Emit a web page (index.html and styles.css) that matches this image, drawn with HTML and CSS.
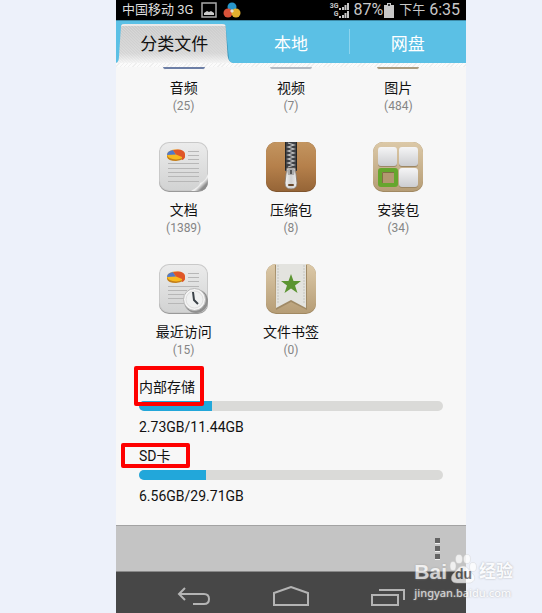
FILE: index.html
```html
<!DOCTYPE html>
<html lang="zh-CN">
<head>
  <meta charset="UTF-8">
  <meta name="viewport" content="width=device-width, initial-scale=1">
  <title>分类文件</title>
  <link rel="stylesheet" href="styles.css">
</head>
<body>
  <div class="phone">
    <header class="status">
      <span class="carrier">中国移动 3G</span>
      <svg class="shot-icon" width="16" height="16" viewBox="0 0 16 16">
        <rect x="1" y="1" width="14" height="14" fill="none" stroke="#aaa" stroke-width="1.5"/>
        <path d="M3 13V11L6 9L8 10L10 9L13 11V13Z" fill="#ccc"/>
      </svg>
      <svg class="app-icon" width="18" height="16" viewBox="0 0 18 16">
        <circle cx="9" cy="5" r="4.5" fill="#2795c9"/>
        <circle cx="5" cy="11" r="4.5" fill="#d9533a"/>
        <circle cx="13" cy="11" r="4.5" fill="#e3b02f"/>
        <path d="M9 7L11 9L9 11L7 9Z" fill="#e9ddd0"/>
      </svg>
      <div class="signals">
        <div class="signal">
          <span>3G</span>
          <svg width="10" height="7" viewBox="0 0 10 7"><path d="M0 5h2v2H0zM3 4h2v3H3zM5.5 2h2v5h-2zM8 0h2v7H8z" fill="#c8c8c8"/></svg>
        </div>
        <div class="signal">
          <span>G</span>
          <svg width="10" height="7" viewBox="0 0 10 7"><path d="M0 5h2v2H0zM3 4h2v3H3zM5.5 2h2v5h-2zM8 0h2v7H8z" fill="#c8c8c8"/></svg>
        </div>
      </div>
      <span class="battery-text">87%</span>
      <svg class="battery" width="10" height="15" viewBox="0 0 10 15">
        <path d="M3 0H7V2H10V15H0V2H3Z" fill="#c8c8c8"/>
        <path d="M4 1H6V3H4Z" fill="#333"/>
      </svg>
      <span class="noon">下午</span>
      <span class="clock">6:35</span>
    </header>

    <nav class="tabs">
      <button class="tab active" type="button">
        <svg class="tab-shape" viewBox="0 0 117 43" preserveAspectRatio="none">
          <defs>
            <linearGradient id="tabFill" x1="0" y1="0" x2="0" y2="1">
              <stop offset="0" stop-color="#c9c9c9"/>
              <stop offset="0.75" stop-color="#d4d4d4"/>
              <stop offset="1" stop-color="#f3f3f3"/>
            </linearGradient>
            <pattern id="weave" width="3" height="3" patternUnits="userSpaceOnUse">
              <path d="M0 0L3 3" stroke="#fff" stroke-opacity="0.3" stroke-width="1"/>
            </pattern>
          </defs>
          <path d="M0 43Q4 42 4 36L6 6Q6 3 9 3H106Q109 3 110 6L113 36Q113 42 117 43Z" fill="#3b92b5"/>
          <path d="M0 43Q3 42 3 36L5 6Q5 3 8 3H107Q110 3 110 6L112 36Q113 42 117 43Z" fill="url(#tabFill)"/>
          <path d="M0 43Q3 42 3 36L5 6Q5 3 8 3H107Q110 3 110 6L112 36Q113 42 117 43Z" fill="url(#weave)"/>
          <path d="M6 5Q6 4 8 4H107Q109 4 109 5" fill="none" stroke="#f2f2f2" stroke-width="1.5"/>
        </svg>
        <span class="tab-text">分类文件</span>
      </button>
      <button class="tab" type="button">本地</button>
      <button class="tab divided" type="button">网盘</button>
    </nav>
    <div class="tab-edge"></div>

    <main class="content">
      <div class="categories">
        <button class="category" type="button">
          <span class="icon-cut music"></span>
          <span class="name">音频</span>
          <span class="count">(25)</span>
        </button>
        <button class="category" type="button">
          <span class="icon-cut video"></span>
          <span class="name">视频</span>
          <span class="count">(7)</span>
        </button>
        <button class="category" type="button">
          <span class="icon-cut picture"></span>
          <span class="name">图片</span>
          <span class="count">(484)</span>
        </button>

        <button class="category" type="button">
          <svg width="50" height="50" viewBox="0 0 50 50">
            <defs>
              <linearGradient id="paper" x1="0" y1="0" x2="0" y2="1">
                <stop offset="0" stop-color="#ebebeb"/>
                <stop offset="1" stop-color="#d2d3d3"/>
              </linearGradient>
              <linearGradient id="curl" x1="0.2" y1="0.2" x2="0.75" y2="0.75">
                <stop offset="0" stop-color="#d2d3d3"/>
                <stop offset="0.4" stop-color="#fff"/>
                <stop offset="0.7" stop-color="#eee"/>
                <stop offset="1" stop-color="#8c8c8c"/>
              </linearGradient>
            </defs>
            <rect x="0" y="2" width="49" height="48" rx="10" fill="#999"/>
            <rect x="0" y="0" width="49" height="49" rx="10" fill="#c9c9c9"/>
            <rect x="1" y="1" width="47" height="47" rx="9" fill="url(#paper)"/>
            <path d="M49 32V39Q49 49 39 49H32Q41 44 41 41Q46 40 49 32Z" fill="url(#curl)"/>
            <path d="M29 9.5H40M29 13.5H40M29 17.5H40M9 21.5H40M9 26.5H40M9 30.5H40M9 34.5H40M9 39.5H40" stroke="#b7b7b7"/>
            <path d="M8 13V15Q9 19 17 19Q26 18 26 14V12Z" fill="#c47e18"/>
            <ellipse cx="17" cy="12.5" rx="9" ry="5" fill="#f8b91e"/>
            <path d="M17 12.5L14 8Q8 9 8 13Z" fill="#5278c9"/>
            <path d="M17 12.5L14 8Q25 6 26 12V14Q26 17 23 18V15Z" fill="#df5628"/>
          </svg>
          <span class="name">文档</span>
          <span class="count">(1389)</span>
        </button>
        <button class="category" type="button">
          <svg width="50" height="50" viewBox="0 0 50 50">
            <defs>
              <linearGradient id="leather" x1="0" y1="0" x2="0" y2="1">
                <stop offset="0" stop-color="#c39560"/>
                <stop offset="0.5" stop-color="#b5804b"/>
                <stop offset="1" stop-color="#966537"/>
              </linearGradient>
              <linearGradient id="pull" x1="0" y1="0" x2="1" y2="0">
                <stop offset="0" stop-color="#f4f4f4"/>
                <stop offset="0.5" stop-color="#d0d0d0"/>
                <stop offset="1" stop-color="#eee"/>
              </linearGradient>
            </defs>
            <rect width="50" height="50" rx="10" fill="#80552e"/>
            <rect width="50" height="49" rx="10" fill="url(#leather)"/>
            <path d="M19 0H31V29H19Z" fill="#3d3f43"/>
            <path d="M19.5 0V28M30.5 0V28" stroke="#252525"/>
            <path d="M22 1L28 3L22 5L28 7L22 9L28 11L22 13L28 15L22 17L28 19L22 21L28 23L22 25" fill="none" stroke="#c0c0c0" stroke-width="1.2"/>
            <path d="M21 26H29L30 32L31 41Q31 47 25 47Q19 47 19 41L20 32Z" fill="url(#pull)" stroke="#80756a" stroke-width="0.8"/>
            <path d="M21 28Q25 25 29 28L28 33H22Z" fill="#aaa"/>
            <path d="M24 28H26V32H24Z" fill="#555"/>
            <rect x="22" y="42" width="6" height="2" rx="1" fill="#68482b"/>
          </svg>
          <span class="name">压缩包</span>
          <span class="count">(8)</span>
        </button>
        <button class="category" type="button">
          <svg width="50" height="50" viewBox="0 0 50 50">
            <defs>
              <linearGradient id="sand" x1="0" y1="0" x2="0" y2="1">
                <stop offset="0" stop-color="#dcc9a8"/>
                <stop offset="1" stop-color="#b69d76"/>
              </linearGradient>
              <linearGradient id="block" x1="0" y1="0" x2="0" y2="1">
                <stop offset="0" stop-color="#f5f5f6"/>
                <stop offset="1" stop-color="#cccdd0"/>
              </linearGradient>
            </defs>
            <rect width="50" height="50" rx="10" fill="#a18962"/>
            <rect width="50" height="49" rx="10" fill="url(#sand)"/>
            <g fill="#9c8765">
              <rect x="5" y="6" width="19" height="19" rx="3"/>
              <rect x="26" y="6" width="19" height="19" rx="3"/>
              <rect x="26" y="27" width="19" height="19" rx="3"/>
            </g>
            <g fill="url(#block)">
              <rect x="5" y="5" width="19" height="19" rx="3"/>
              <rect x="26" y="5" width="19" height="19" rx="3"/>
              <rect x="26" y="26" width="19" height="19" rx="3"/>
            </g>
            <rect x="7" y="28" width="16" height="15" rx="1" fill="#b39870" stroke="#66a62d" stroke-width="4"/>
            <path d="M9.5 41V30.5H21" fill="none" stroke="#807044"/>
          </svg>
          <span class="name">安装包</span>
          <span class="count">(34)</span>
        </button>

        <button class="category" type="button">
          <svg width="50" height="50" viewBox="0 0 50 50">
            <rect x="0" y="2" width="49" height="48" rx="10" fill="#999"/>
            <rect x="0" y="0" width="49" height="49" rx="10" fill="#c9c9c9"/>
            <rect x="1" y="1" width="47" height="47" rx="9" fill="url(#paper)"/>
            <path d="M29 9.5H40M29 13.5H40M29 17.5H40M9 22.5H40M9 26.5H28M9 30.5H25M9 34.5H25M9 39.5H26" stroke="#b7b7b7"/>
            <path d="M8 13V15Q9 19 17 19Q26 18 26 14V12Z" fill="#c47e18"/>
            <ellipse cx="17" cy="12.5" rx="9" ry="5" fill="#f8b91e"/>
            <path d="M17 12.5L14 8Q8 9 8 13Z" fill="#5278c9"/>
            <path d="M17 12.5L14 8Q25 6 26 12V14Q26 17 23 18V15Z" fill="#df5628"/>
            <circle cx="37" cy="37" r="12" fill="#8f8f8f"/>
            <circle cx="35.5" cy="35.5" r="11" fill="#f4f4f4" stroke="#b8b8b8"/>
            <circle cx="35.5" cy="35.5" r="8.5" fill="#f0f1f1" stroke="#ddd"/>
            <path d="M34 28L35 36L39 40" fill="none" stroke="#3b4248" stroke-width="2"/>
          </svg>
          <span class="name">最近访问</span>
          <span class="count">(15)</span>
        </button>
        <button class="category" type="button">
          <svg width="50" height="50" viewBox="0 0 50 50">
            <rect width="50" height="50" rx="10" fill="#a18962"/>
            <rect width="50" height="49" rx="10" fill="url(#sand)"/>
            <path d="M9 1H41V46L25 38L10 46Z" fill="#a08a66"/>
            <path d="M10 0H40V44L25 36L10 44Z" fill="#e3e3df"/>
            <path d="M12 1V40M38 1V40" stroke="#c5c5c0" stroke-dasharray="2 1"/>
            <path d="M25 10L27.5 17H35L29 21.5L31.5 29L25 24.5L18.5 29L21 21.5L15 17H22.5Z" fill="#5b9431"/>
          </svg>
          <span class="name">文件书签</span>
          <span class="count">(0)</span>
        </button>
      </div>

      <div class="storage">
        <label class="storage-name" for="internal">内部存储<span class="mark mark-internal"></span></label>
        <progress class="usage" id="internal" value="2.73" max="11.44"></progress>
        <span class="amount">2.73GB/11.44GB</span>
      </div>
      <div class="storage">
        <label class="storage-name" for="sdcard">SD卡<span class="mark mark-sd"></span></label>
        <progress class="usage" id="sdcard" value="6.56" max="29.71"></progress>
        <span class="amount">6.56GB/29.71GB</span>
      </div>
    </main>

    <div class="toolbar">
      <button class="more" type="button" aria-label="更多">
        <span></span><span></span><span></span>
      </button>
    </div>

    <footer class="keys">
      <button type="button" aria-label="返回">
        <svg width="34" height="20" viewBox="0 0 34 20"><path d="M8 2L2 8L8 14M2 8H27Q32 8 32 13Q32 18 27 18H16" fill="none" stroke="#b4b4b4" stroke-width="2"/></svg>
      </button>
      <button type="button" aria-label="主页">
        <svg width="36" height="20" viewBox="0 0 36 20"><path d="M1 19V7L18 1L35 7V19Z" fill="none" stroke="#b4b4b4" stroke-width="2"/></svg>
      </button>
      <button type="button" aria-label="最近任务">
        <svg width="34" height="20" viewBox="0 0 34 20"><path d="M1 9H27V19H1ZM8 4H33V14" fill="none" stroke="#b4b4b4" stroke-width="2"/></svg>
      </button>
    </footer>
  </div>

  <div class="watermark">
    <div class="brand">
      <span class="bai">Bai</span>
      <span class="paw">
        <svg width="28" height="30" viewBox="0 0 28 30">
          <g fill="#fff" stroke="#ccc" stroke-width="0.5">
            <ellipse cx="4" cy="12" rx="3" ry="4.5"/>
            <ellipse cx="10" cy="5" rx="3.5" ry="4.5"/>
            <ellipse cx="18" cy="5" rx="3.5" ry="4.5"/>
            <ellipse cx="24" cy="13" rx="3.5" ry="4.5"/>
            <path d="M14 12C19 12 20 17 24 20C28 25 24 29 20 29H8C2 29 1 24 4 20C8 17 9 12 14 12Z"/>
          </g>
        </svg>
        <span class="du">du</span>
      </span>
      <span class="jingyan">经验</span>
    </div>
    <div class="site">jingyan.baidu.com</div>
  </div>
</body>
</html>
```

FILE: styles.css
```css
* {
  box-sizing: border-box;
}

body {
  margin: 0;
  min-height: 100vh;
  position: relative;
  display: grid;
  grid-template-columns: 116fr 350fr 76fr;
  background: #edf1fa;
  font-family: Roboto, "Noto Sans CJK SC", sans-serif;
  color: #111;
}

button {
  margin: 0;
  padding: 0;
  border: none;
  background: none;
  font: inherit;
  color: inherit;
  cursor: pointer;
}

svg {
  display: block;
}

.phone {
  grid-column: 2;
  display: flex;
  flex-direction: column;
  background: #f7f7f7;
}

/* status bar */
.status {
  display: flex;
  align-items: center;
  height: 20px;
  padding: 0 6px;
  background: #000;
  color: #c8c8c8;
  font-size: 16px;
  line-height: 16px;
  white-space: nowrap;
  overflow: hidden;
}

.carrier {
  font-size: 13px;
  color: #ddd;
}

.shot-icon {
  margin-left: 8px;
}

.app-icon {
  margin-left: 6px;
}

.signals {
  margin-left: auto;
}

.signal {
  display: flex;
  justify-content: flex-end;
  align-items: center;
  gap: 1px;
  font-size: 7px;
  font-weight: bold;
  line-height: 8px;
}

.battery-text {
  margin-left: 4px;
}

.battery {
  margin-left: 1px;
}

.noon {
  margin-left: 5px;
  font-size: 13px;
}

.clock {
  margin-left: 4px;
}

/* tabs */
.tabs {
  display: grid;
  grid-template-columns: repeat(3, 1fr);
  height: 43px;
  background: #5bc0e5;
  border-top: 1px solid #3d8ba8;
}

.tab {
  position: relative;
  padding-top: 4px;
  font-size: 17px;
  line-height: 24px;
  color: #fff;
}

.tab.active {
  color: #111;
}

.tab-shape {
  position: absolute;
  inset: 0;
  width: 100%;
  height: 100%;
}

.tab-text {
  position: relative;
}

.divided::before {
  content: "";
  position: absolute;
  left: 0;
  top: 8px;
  width: 1px;
  height: 25px;
  background: #8dd4ee;
}

.tab-edge {
  height: 4px;
  background: repeating-linear-gradient(135deg, #fbfbfb 0, #fbfbfb 2px, #efefef 2px, #efefef 3px);
}

/* file categories */
.content {
  flex: 1;
}

.categories {
  display: grid;
  grid-template-columns: repeat(3, 1fr);
  row-gap: 28px;
  padding: 0 14px;
}

.category {
  display: flex;
  flex-direction: column;
  align-items: center;
}

.icon-cut {
  width: 42px;
  height: 3px;
  border-bottom: 1px solid #f7f7f7;
  border-radius: 0 0 8px 8px;
}

.music {
  background: #6d7fa6;
}

.video {
  background: #b4bac2;
}

.picture {
  background: #ab9c80;
}

.name {
  margin-top: 8px;
  font-size: 14px;
  line-height: 20px;
}

.count {
  font-size: 12px;
  line-height: 16px;
  color: #858585;
}

/* storage usage */
.storage {
  display: flex;
  flex-direction: column;
  align-items: flex-start;
  margin-bottom: 9px;
  padding: 0 23px;
  font-size: 14px;
  line-height: 20px;
}

.categories + .storage {
  margin-top: 19px;
}

.storage:last-child {
  margin-bottom: 19px;
}

.storage-name {
  position: relative;
}

.usage {
  appearance: none;
  -webkit-appearance: none;
  width: 100%;
  height: 10px;
  margin: 4px 0 6px;
  border: none;
  border-radius: 5px;
  background: #dadad8;
  overflow: hidden;
}

.usage::-webkit-progress-bar {
  background: #dadad8;
}

.usage::-webkit-progress-value {
  background: #22a7da;
}

.mark {
  position: absolute;
  z-index: 1;
  border: 4px solid #fe0000;
  border-radius: 2px;
}

.mark-internal {
  left: -5px;
  top: -11px;
  width: 70px;
  height: 40px;
}

.mark-sd {
  left: -18px;
  top: -3px;
  width: 69px;
  height: 25px;
}

/* bottom bars */
.toolbar {
  display: flex;
  justify-content: flex-end;
  align-items: center;
  height: 47px;
  padding-right: 26px;
  background: #c4c4c4;
  border-top: 1px solid #a3a3a3;
  border-bottom: 1px solid #888;
}

.more {
  display: grid;
  gap: 2px;
}

.more span {
  width: 5px;
  height: 6px;
  background: #646464;
  border-bottom: 1px solid #eee;
}

.keys {
  display: grid;
  grid-template-columns: repeat(3, 1fr);
  height: 41px;
  padding: 7px 29px 0;
  background: #474747;
}

.keys button {
  display: flex;
  justify-content: center;
  align-items: center;
}

/* watermark over the lower right corner */
.watermark {
  position: absolute;
  right: 29px;
  bottom: 11px;
  color: #fff;
  opacity: 0.75;
  white-space: nowrap;
  text-shadow: 0 0 2px #999;
}

.brand {
  display: flex;
  align-items: flex-end;
  gap: 2px;
  font-family: "Liberation Sans", "Noto Sans CJK SC", sans-serif;
  font-weight: bold;
  line-height: 24px;
}

.bai {
  font-size: 21px;
}

.paw {
  position: relative;
}

.du {
  position: absolute;
  left: 6px;
  bottom: 0;
  font-size: 14px;
  line-height: 20px;
  color: #555;
  text-shadow: none;
}

.jingyan {
  font-size: 17px;
}

.site {
  font-family: "Noto Sans", sans-serif;
  font-size: 11px;
  font-weight: 500;
  line-height: 18px;
}
```
